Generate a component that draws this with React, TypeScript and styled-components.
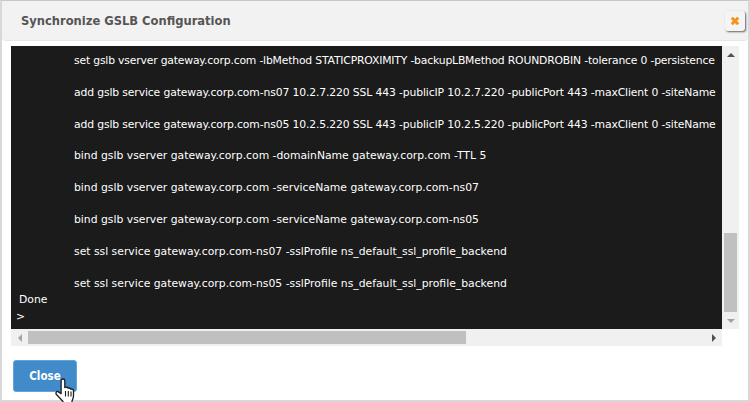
import styled, { createGlobalStyle } from 'styled-components';

const GlobalStyle = createGlobalStyle`
  html, body { margin: 0; padding: 0; background: #ffffff; }
  body { width: 750px; height: 402px; overflow: hidden; font-family: "DejaVu Sans", Verdana, sans-serif; }
`;

// long lines stop where the terminal's right edge cuts them in the screenshot
const commands = [
  { text: 'set gslb vserver gateway.corp.com -lbMethod STATICPROXIMITY -backupLBMethod ROUNDROBIN -tolerance 0 -persistence', tracking: -0.18 },
  { text: 'add gslb service gateway.corp.com-ns07 10.2.7.220 SSL 443 -publicIP 10.2.7.220 -publicPort 443 -maxClient 0 -siteName', tracking: -0.13 },
  { text: 'add gslb service gateway.corp.com-ns05 10.2.5.220 SSL 443 -publicIP 10.2.5.220 -publicPort 443 -maxClient 0 -siteName', tracking: -0.13 },
  { text: 'bind gslb vserver gateway.corp.com -domainName gateway.corp.com -TTL 5', tracking: 0 },
  { text: 'bind gslb vserver gateway.corp.com -serviceName gateway.corp.com-ns07', tracking: 0 },
  { text: 'bind gslb vserver gateway.corp.com -serviceName gateway.corp.com-ns05', tracking: 0 },
  { text: 'set ssl service gateway.corp.com-ns07 -sslProfile ns_default_ssl_profile_backend', tracking: 0 },
  { text: 'set ssl service gateway.corp.com-ns05 -sslProfile ns_default_ssl_profile_backend', tracking: 0 },
];

const HandCursor = () => (
  <CursorIcon width="21" height="26" viewBox="0 0 21 26">
    <path
      d="M8 1c1.100 0 1.800.8 1.800 1.800V9.500l.8-.2c.9-.2 2 0 2.200.8l.8-.1c1-.1 1.900.3 2.100 1.100l.7-.1c1.200-.1 2.100.7 2.100 1.900V18c0 2-1 3.500-1.500 5v3H8v-2.500L1.500 16.500C.3 15 1.300 13 3.200 13.600l2.900 2V2.800C6.100 1.800 6.900 1 8 1z"
      fill="#ffffff"
      stroke="#1c1c1c"
      strokeWidth="1.300"
      strokeLinejoin="round"
    />
    <path d="M10.500 13v5.500M13.300 13v5.500M16 13.500v5" stroke="#1c1c1c" strokeWidth="1.100" fill="none" />
  </CursorIcon>
);

export default function App() {
  return (
    <>
      <GlobalStyle />
      <Dialog>
        <Header>
          <Title>Synchronize GSLB Configuration</Title>
          <CloseIconButton>
            <svg width="10" height="10" viewBox="0 0 10 10">
              <path d="M1.800 1.800l6.400 6.400M8.200 1.800l-6.400 6.400" stroke="#f39317" strokeWidth="3" fill="none" />
            </svg>
          </CloseIconButton>
        </Header>
        <Body>
          <TerminalFrame>
            <Terminal>
              <CommandList>
                {commands.map(command => (
                  <CommandLine key={command.text} $tracking={command.tracking}>
                    {command.text}
                  </CommandLine>
                ))}
              </CommandList>
              <DoneLine>Done</DoneLine>
              <PromptLine>&gt;</PromptLine>
            </Terminal>
            <VerticalBar>
              <ArrowUp />
              <VerticalTrack>
                <VerticalThumb />
              </VerticalTrack>
              <ArrowDown />
            </VerticalBar>
            <HorizontalBar>
              <ArrowLeft />
              <HorizontalTrack>
                <HorizontalThumb />
              </HorizontalTrack>
              <ArrowRight />
            </HorizontalBar>
          </TerminalFrame>
        </Body>
        <Footer>
          <CloseButton>
            Close
            <HandCursor />
          </CloseButton>
        </Footer>
      </Dialog>
    </>
  );
}

const Dialog = styled.div`
  box-sizing: border-box;
  width: 750px;
  height: 402px;
  display: flex;
  flex-direction: column;
  background: #ffffff;
  border-top: 1px solid #c8c8c8;
  border-left: 2px solid #d8d8d8;
  border-right: 2px solid #d8d8d8;
  border-bottom: 2px solid #d8d8d8;
`;

const Header = styled.div`
  height: 39px;
  flex: none;
  display: flex;
  align-items: center;
  justify-content: space-between;
  padding: 0 3px 0 19px;
  background: #f2f2f2;
  border-bottom: 1px solid #e6e6e6;
  border-radius: 0 0 4px 4px;
`;

const Title = styled.h1`
  margin: 0;
  font-size: 12.800px;
  font-stretch: condensed;
  font-weight: 700;
  color: #555555;
`;

const CloseIconButton = styled.div`
  width: 20px;
  height: 20px;
  display: flex;
  align-items: center;
  justify-content: center;
  margin-top: 1px;
  background: #f4f4f4;
  border-radius: 3px;
  box-shadow: 1px 1px 2px rgba(0, 0, 0, 0.6);
`;

const Body = styled.div`
  padding: 5px 0 0 9px;
`;

const TerminalFrame = styled.div`
  width: 728px;
  display: grid;
  grid-template-columns: 711px 17px;
  grid-template-rows: 283px 17px;
`;

const Terminal = styled.div`
  overflow: hidden;
  display: flex;
  flex-direction: column;
  background: #1b1b1b;
  color: #ffffff;
  font-size: 10.800px;
  line-height: 14px;
`;

const CommandList = styled.div`
  display: flex;
  flex-direction: column;
  gap: 17.800px;
  padding: 8px 0 0 63px;
`;

const CommandLine = styled.div<{ $tracking: number }>`
  white-space: nowrap;
  letter-spacing: ${p => p.$tracking}px;
`;

const DoneLine = styled.div`
  margin-top: 2px;
  padding-left: 8px;
`;

const PromptLine = styled.div`
  margin-top: 3px;
  padding-left: 5px;
`;

const VerticalBar = styled.div`
  display: flex;
  flex-direction: column;
  background: #f0f0f0;
`;

const VerticalTrack = styled.div`
  flex: 1;
  display: flex;
  flex-direction: column;
  justify-content: flex-end;
  padding: 0 2px;
`;

const VerticalThumb = styled.div`
  height: 79px;
  background: #c0c0c0;
`;

const HorizontalBar = styled.div`
  display: flex;
  background: #f0f0f0;
`;

const HorizontalTrack = styled.div`
  flex: 1;
  padding: 2px 0;
`;

const HorizontalThumb = styled.div`
  width: 438px;
  height: 13px;
  background: #c0c0c0;
`;

const ArrowCell = styled.div`
  flex: none;
  width: 17px;
  height: 17px;
  display: flex;
  align-items: center;
  justify-content: center;
  &::before {
    content: '';
    width: 0;
    height: 0;
  }
`;

const ArrowUp = styled(ArrowCell)`
  &::before {
    border-left: 4px solid transparent;
    border-right: 4px solid transparent;
    border-bottom: 4px solid #505050;
  }
`;

const ArrowDown = styled(ArrowCell)`
  &::before {
    border-left: 4px solid transparent;
    border-right: 4px solid transparent;
    border-top: 4px solid #a3a3a3;
  }
`;

const ArrowLeft = styled(ArrowCell)`
  &::before {
    border-top: 4px solid transparent;
    border-bottom: 4px solid transparent;
    border-right: 4px solid #a3a3a3;
  }
`;

const ArrowRight = styled(ArrowCell)`
  &::before {
    border-top: 4px solid transparent;
    border-bottom: 4px solid transparent;
    border-left: 4px solid #505050;
  }
`;

const Footer = styled.div`
  padding: 14px 0 0 11px;
`;

const CloseButton = styled.div`
  position: relative;
  box-sizing: border-box;
  width: 64px;
  height: 32px;
  display: flex;
  align-items: center;
  justify-content: center;
  background: #428bca;
  border: 1px solid #62a3dc;
  border-radius: 3px;
  color: #ffffff;
  font-size: 11.500px;
  font-stretch: condensed;
  font-weight: 700;
`;

const CursorIcon = styled.svg`
  position: absolute;
  left: 41px;
  top: 17px;
`;
